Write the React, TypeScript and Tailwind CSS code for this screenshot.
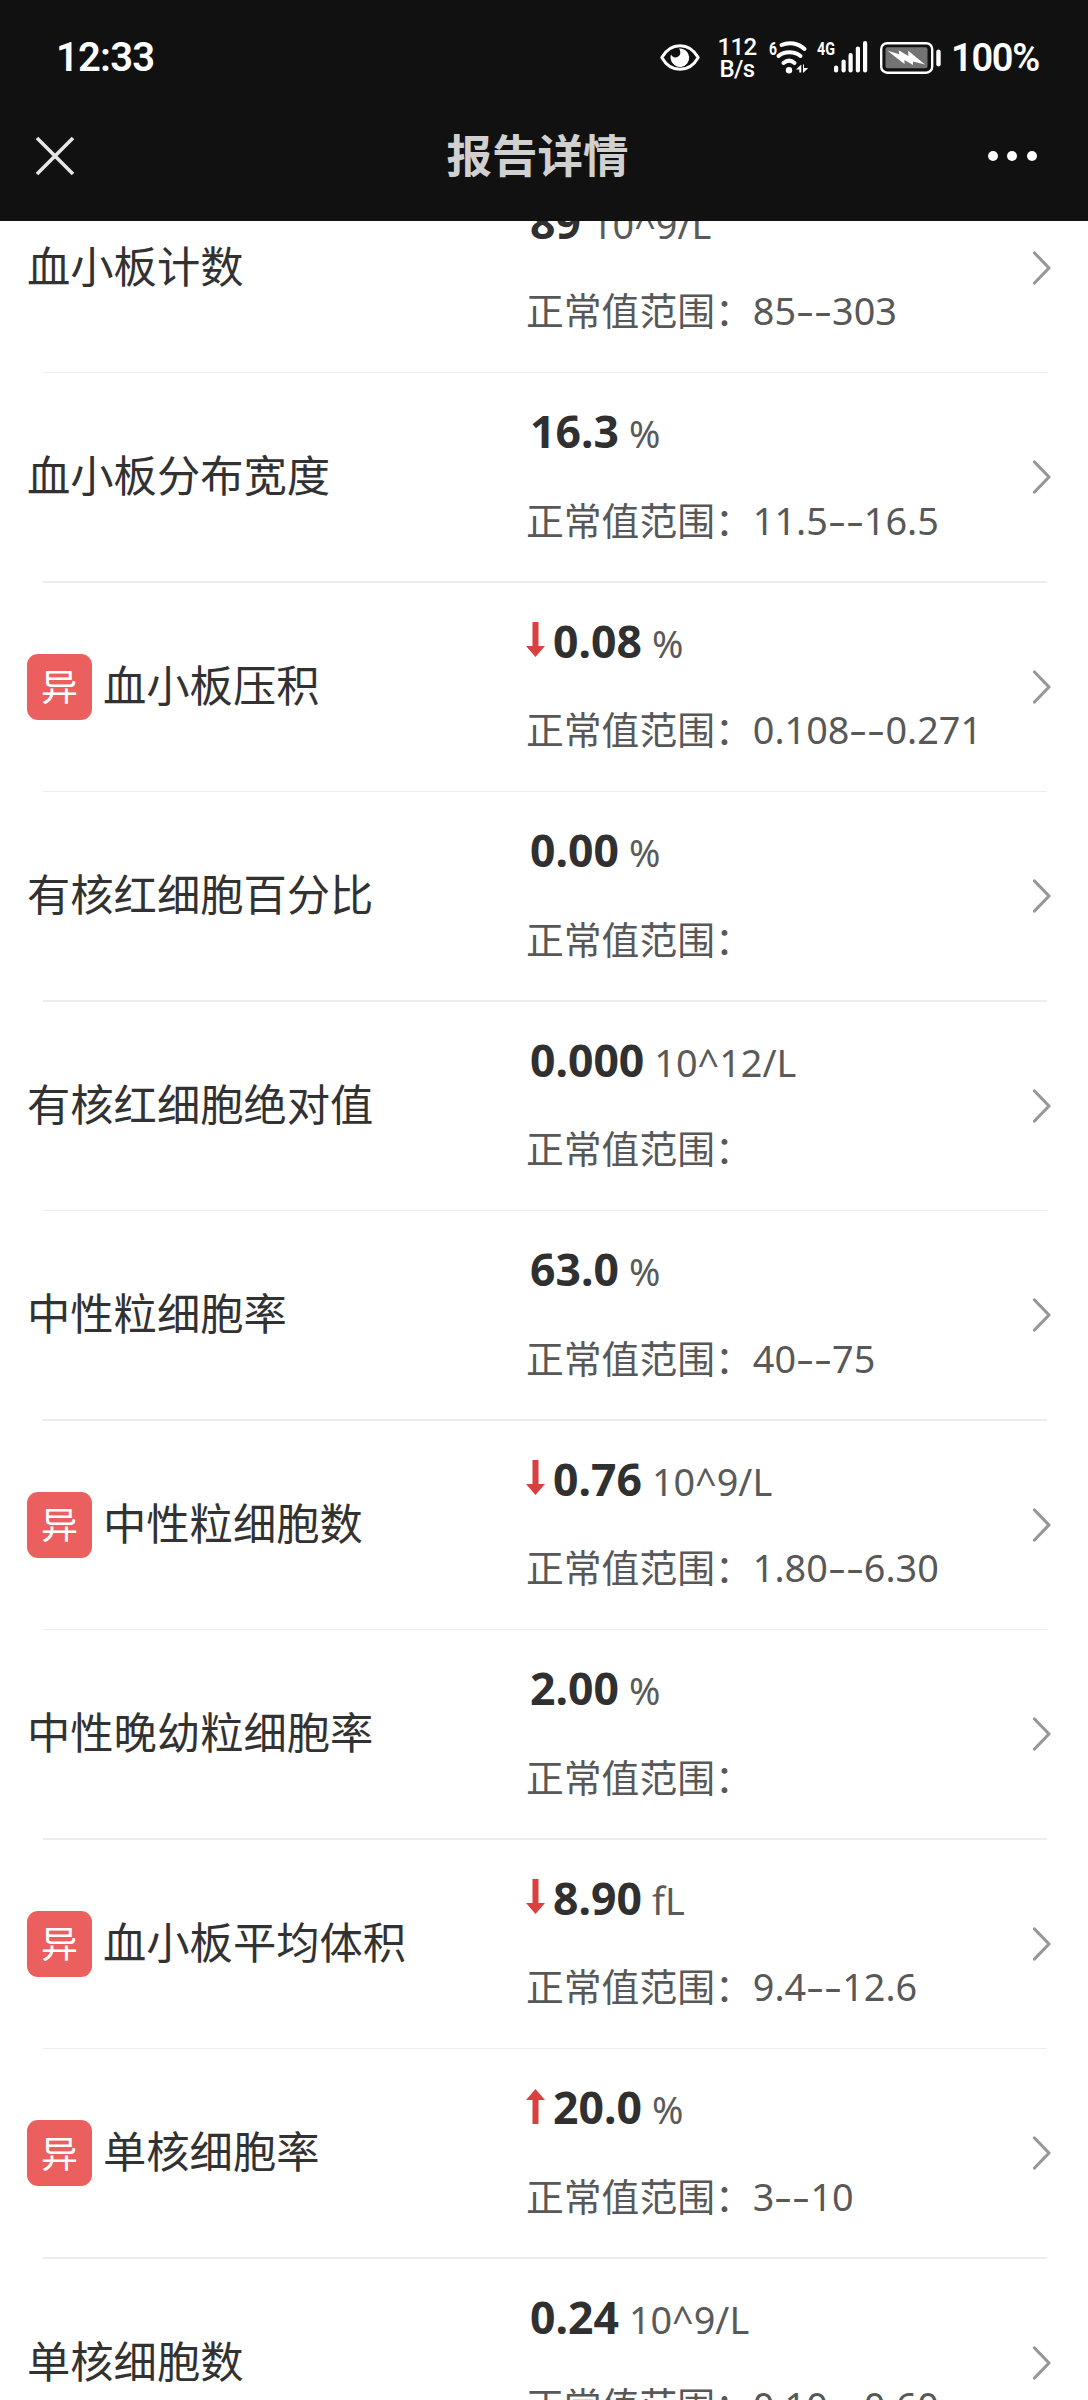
import React from 'react';

interface ReportItem {
  name: string;
  value: string;
  unit: string;
  range: string;
  trend?: 'up' | 'down';
}

const items: ReportItem[] = [
  { name: '血小板计数', value: '89', unit: '10^9/L', range: '85--303' },
  { name: '血小板分布宽度', value: '16.3', unit: '%', range: '11.5--16.5' },
  { name: '血小板压积', value: '0.08', unit: '%', range: '0.108--0.271', trend: 'down' },
  { name: '有核红细胞百分比', value: '0.00', unit: '%', range: '' },
  { name: '有核红细胞绝对值', value: '0.000', unit: '10^12/L', range: '' },
  { name: '中性粒细胞率', value: '63.0', unit: '%', range: '40--75' },
  { name: '中性粒细胞数', value: '0.76', unit: '10^9/L', range: '1.80--6.30', trend: 'down' },
  { name: '中性晚幼粒细胞率', value: '2.00', unit: '%', range: '' },
  { name: '血小板平均体积', value: '8.90', unit: 'fL', range: '9.4--12.6', trend: 'down' },
  { name: '单核细胞率', value: '20.0', unit: '%', range: '3--10', trend: 'up' },
  { name: '单核细胞数', value: '0.24', unit: '10^9/L', range: '0.10--0.60' },
];

function StatusIcons() {
  return (
    <div className="flex items-center text-white">
      {/* Eye comfort */}
      <svg width="40" height="30" viewBox="0 0 40 30" fill="none">
        <path
          d="M1.8 14.500C6 7 12.500 2.700 20 2.700S34 7 38.200 14.500C34 22 27.500 26.300 20 26.300S6 22 1.800 14.500Z"
          stroke="currentColor"
          strokeWidth="3"
          strokeLinejoin="round"
        />
        <path
          d="M19 5.500a9.300 9.300 0 1 1-8.300 10.500c-.3-1.700-.2-3 .4-4.500.8 1.800 2.300 2.900 4.200 2.900 3 0 5-2 5-4.600 0-1.800-.3-3-1.300-4.300Z"
          fill="currentColor"
        />
      </svg>
      <div className="ml-[17px] w-[40px] flex flex-col items-center font-medium text-[24px] leading-[22px] tracking-[-0.6px]">
        <span>112</span>
        <span>B/s</span>
      </div>
      {/* Wifi */}
      <svg className="ml-[12px] overflow-visible" width="42" height="36" viewBox="0 0 42 36" fill="none">
        <text x="0" y="15" fontSize="19" fontWeight="700" fill="currentColor" textLength="8" lengthAdjust="spacingAndGlyphs">6</text>
        <g stroke="currentColor" strokeWidth="4" strokeLinecap="round">
          <path d="M12.500 5C20 1.800 29 3 35.500 9" />
          <path d="M9.500 16C15.500 11 25 11 31.500 16" />
          <path d="M14.500 23C18 20 22 20 25.500 23" />
        </g>
        <circle cx="20" cy="30.300" r="3.200" fill="currentColor" />
        <path d="M32.300 24.500v8h-2v-3h-3.300zM34 24.500h1v3.500h4.300l-5.300 5z" fill="currentColor" />
      </svg>
      {/* Signal */}
      <svg className="ml-[6px] overflow-visible" width="52" height="36" viewBox="0 0 52 36">
        <text x="0" y="15" fontSize="19" fontWeight="700" fill="currentColor" textLength="18" lengthAdjust="spacingAndGlyphs">4G</text>
        <g fill="currentColor">
          <rect x="17" y="25.500" width="4.200" height="7" rx="2.100" />
          <rect x="24.500" y="19.500" width="4.200" height="13" rx="2.100" />
          <rect x="31.500" y="13" width="4.200" height="19.500" rx="2.100" />
          <rect x="38.800" y="6.500" width="4.200" height="26" rx="2.100" />
          <rect x="46" y="1" width="4.200" height="31.500" rx="2.100" />
        </g>
      </svg>
      {/* Battery */}
      <svg className="ml-[11px]" width="62" height="32" viewBox="0 0 62 32">
        <rect x="1.200" y="1.200" width="51" height="29.500" rx="6" fill="none" stroke="currentColor" strokeWidth="2.400" />
        <rect x="5.500" y="5.200" width="42" height="21" rx="2" fill="#737373" />
        <path
          d="M7.700 8.700 19.300 12.300 18.700 8.300 28.300 14V8.700L37 16 45 22.500 33 19.500V23L24.500 18V22L16 15.500Z"
          fill="currentColor"
        />
        <rect x="56.300" y="7.500" width="4.400" height="17" rx="2.200" fill="currentColor" />
      </svg>
      <span className="ml-[9px] w-[90px] text-[38px] leading-none font-semibold tracking-[-1.3px] whitespace-nowrap">
        100%
      </span>
    </div>
  );
}

function TrendArrow({ trend }: { trend: 'up' | 'down' }) {
  return (
    <svg
      className={trend === 'up' ? 'mr-[8px] -mt-[13px]' : 'mr-[8px] -mt-[13px] rotate-180'}
      width="19"
      height="35"
      viewBox="0 0 19 35"
      fill="#d94141"
    >
      <path d="M9.500 0 19 11h-6.500v24h-6V11H0z" />
    </svg>
  );
}

function ReportRow({ item }: { item: ReportItem }) {
  const [low, high] = item.range.split('--');

  return (
    <div className="h-[209.54px] shrink-0 flex flex-col">
      <div className="flex-1 flex items-center pl-[27px] pr-[36px]">
        <div className="w-[499px] flex items-center">
          {item.trend && (
            <span className="w-[65px] h-[66px] mr-[11px] rounded-[11px] bg-[#ec5f5f] text-white text-[37px] flex items-center justify-center leading-none">
              异
            </span>
          )}
          <span className="text-[43.3px] leading-[60px] text-[#323232] -mt-[2px]">{item.name}</span>
        </div>
        <div className="flex-1 flex flex-col">
          <div className="mt-[3px] h-[60px] flex items-center">
            {item.trend && <TrendArrow trend={item.trend} />}
            <div className={item.trend ? 'leading-[60px] whitespace-nowrap' : 'pl-[4px] leading-[60px] whitespace-nowrap'}>
              <span className="text-[44.500px] font-bold text-[#303030]">{item.value}</span>
              <span className="ml-[10px] text-[37.8px] text-[#5a5a5a]">{item.unit}</span>
            </div>
          </div>
          <div className="mt-[24px] h-[60px] leading-[60px] text-[37.8px] text-[#585858] whitespace-nowrap">
            正常值范围：
            {item.range && (
              <>
                {low}
                <span className="inline-block w-[36px] origin-left scale-x-[1.48]">--</span>
                {high}
              </>
            )}
          </div>
        </div>
        <svg width="20" height="34" viewBox="0 0 20 34" fill="none">
          <path d="M2.500 2 17 17 2.500 32" stroke="#969799" strokeWidth="3.200" strokeLinecap="round" strokeLinejoin="round" />
        </svg>
      </div>
      <div className="h-[1.5px] ml-[43px] mr-[41px] bg-[#ededed]" />
    </div>
  );
}

export default function App() {
  return (
    <div
      lang="zh-CN"
      className="w-[1088px] h-[2400px] overflow-hidden flex flex-col bg-white font-['Noto_Sans','Noto_Sans_CJK_SC',sans-serif]"
    >
      <header className="h-[221px] shrink-0 bg-[#111111]">
        <div className="h-[116px] flex items-center justify-between pl-[56px] pr-[47px] font-['Roboto',sans-serif]">
          <span className="text-[40px] leading-none font-semibold text-white tracking-[-0.8px]">12:33</span>
          <StatusIcons />
        </div>
        <div className="h-[80px] flex items-center justify-between pl-[35px] pr-[51px]">
          <svg width="40" height="40" viewBox="0 0 40 40" stroke="#e6e6e6" strokeWidth="3.600">
            <path d="M2 2 38 38M38 2 2 38" />
          </svg>
          <h1 className="text-[45.5px] leading-none font-bold text-[#d0d0d0] ml-[12px]">报告详情</h1>
          <div className="flex gap-[9.500px]">
            <span className="size-[10px] rounded-full bg-white" />
            <span className="size-[10px] rounded-full bg-white" />
            <span className="size-[10px] rounded-full bg-white" />
          </div>
        </div>
      </header>
      <main className="flex-1 min-h-0 overflow-hidden">
        <div className="-mt-[57.500px] flex flex-col">
          {items.map(item => (
            <ReportRow key={item.name} item={item} />
          ))}
        </div>
      </main>
    </div>
  );
}
